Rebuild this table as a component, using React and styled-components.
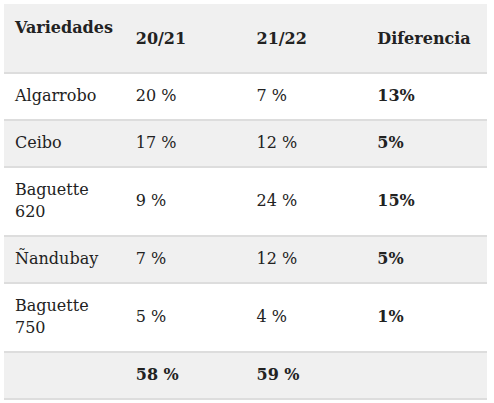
import React from 'react';
import styled, { createGlobalStyle } from 'styled-components';

const GlobalStyle = createGlobalStyle`
  body {
    margin: 0;
    background: #fff;
    font-family: "DejaVu Serif", "Liberation Serif", serif;
    color: #222;
  }
`;

const Wrapper = styled.div`
  padding: 4px 7px 0 4px;
`;

const Table = styled.table`
  width: 483px;
  border-collapse: collapse;
  table-layout: fixed;
  font-size: 16px;
  line-height: 22px;
`;

const HeadRow = styled.tr`
  height: 69px;
  background: #f0f0f0;
  border-bottom: 2px solid #ddd;
`;

const HeadCell = styled.th`
  text-align: left;
  font-weight: bold;
  padding: 13px 11px 12px;
  vertical-align: ${({ top }) => (top ? 'top' : 'middle')};
`;

const Row = styled.tr`
  background: ${({ shaded }) => (shaded ? '#f0f0f0' : '#fff')};
  border-bottom: 2px solid #ddd;
`;

const Cell = styled.td`
  padding: 11px 11px 12px;
  vertical-align: middle;
  font-weight: ${({ bold }) => (bold ? 'bold' : 'normal')};
`;

const rows = [
  { name: 'Algarrobo', a: '20 %', b: '7 %', diff: '13%' },
  { name: 'Ceibo', a: '17 %', b: '12 %', diff: '5%' },
  { name: 'Baguette 620', a: '9 %', b: '24 %', diff: '15%' },
  { name: 'Ñandubay', a: '7 %', b: '12 %', diff: '5%' },
  { name: 'Baguette 750', a: '5 %', b: '4 %', diff: '1%' },
];

export default function App() {
  return (
    <>
      <GlobalStyle />
      <Wrapper>
        <Table>
          <thead>
            <HeadRow>
              <HeadCell top>Variedades</HeadCell>
              <HeadCell>20/21</HeadCell>
              <HeadCell>21/22</HeadCell>
              <HeadCell>Diferencia</HeadCell>
            </HeadRow>
          </thead>
          <tbody>
            {rows.map((r, i) => (
              <Row key={r.name} shaded={i % 2 === 1}>
                <Cell>{r.name}</Cell>
                <Cell>{r.a}</Cell>
                <Cell>{r.b}</Cell>
                <Cell bold>{r.diff}</Cell>
              </Row>
            ))}
            <Row shaded>
              <Cell></Cell>
              <Cell bold>58 %</Cell>
              <Cell bold>59 %</Cell>
              <Cell></Cell>
            </Row>
          </tbody>
        </Table>
      </Wrapper>
    </>
  );
}
